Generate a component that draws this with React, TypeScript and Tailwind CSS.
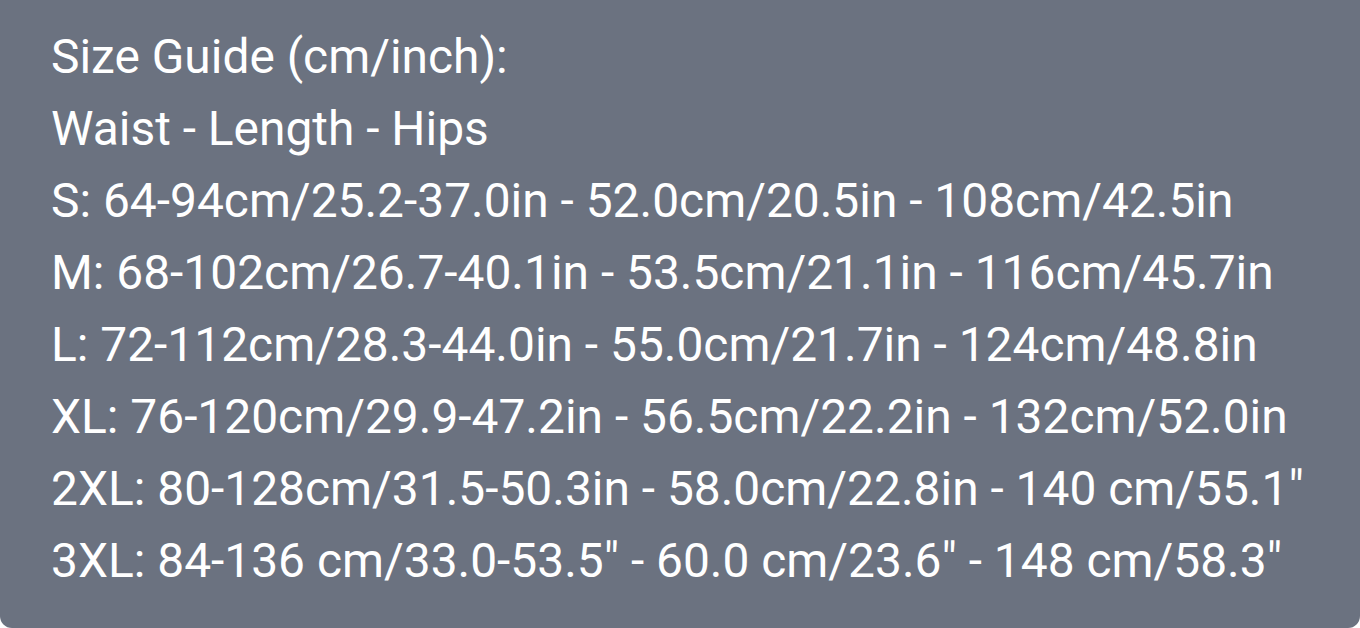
export default function App() {
  const lines = [
    "Size Guide (cm/inch):",
    "Waist - Length - Hips",
    "S: 64-94cm/25.2-37.0in - 52.0cm/20.5in - 108cm/42.5in",
    "M: 68-102cm/26.7-40.1in - 53.5cm/21.1in - 116cm/45.7in",
    "L: 72-112cm/28.3-44.0in - 55.0cm/21.7in - 124cm/48.8in",
    "XL: 76-120cm/29.9-47.2in - 56.5cm/22.2in - 132cm/52.0in",
    '2XL: 80-128cm/31.5-50.3in - 58.0cm/22.8in - 140 cm/55.1"',
    '3XL: 84-136 cm/33.0-53.5" - 60.0 cm/23.6" - 148 cm/58.3"',
  ];
  return (
    <div className="w-[1360px] h-[628px] bg-white">
      <div className="h-[628px] bg-[#6b7280] rounded-b-xl pl-[51px] pt-[21px] text-white text-[47.9px] leading-[72px] font-['Roboto',sans-serif]">
        {lines.map((l) => (
          <div key={l} className="whitespace-nowrap">{l}</div>
        ))}
      </div>
    </div>
  );
}
